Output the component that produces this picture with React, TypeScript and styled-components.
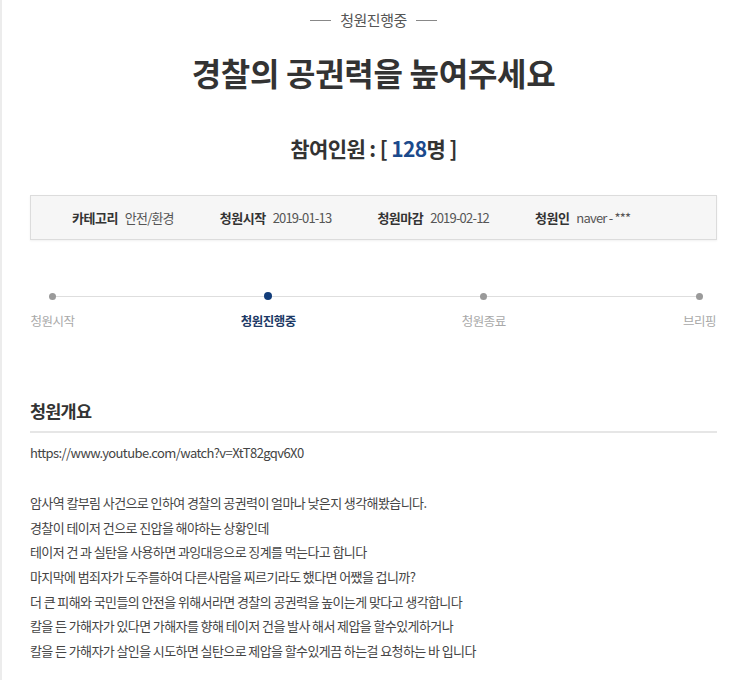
import React from "react";
import styled, { createGlobalStyle } from "styled-components";

const Global = createGlobalStyle`
  html, body { margin: 0; padding: 0; background: #fff; }
  body { font-family: "Noto Sans CJK KR", "Noto Sans", sans-serif; color: #444; }
`;

const Page = styled.div`
  border-left: 2px solid #ececec;
  min-height: 680px;
  box-sizing: border-box;
  padding: 10px 28px 0 28px;
`;

const Status = styled.div`
  display: flex;
  justify-content: center;
  align-items: center;
  gap: 9px;
  font-size: 15px;
  line-height: 20px;
  color: #555;
  letter-spacing: -0.5px;
  &::before, &::after {
    content: "";
    width: 21px;
    height: 1px;
    background: #888;
  }
`;

const Title = styled.h1`
  margin: 22px 0 0;
  text-align: center;
  font-size: 32px;
  line-height: 40px;
  font-weight: 700;
  color: #333;
  letter-spacing: -0.3px;
`;

const Count = styled.div`
  margin-top: 41px;
  text-align: center;
  font-size: 21px;
  line-height: 30px;
  font-weight: 700;
  color: #333;
  letter-spacing: -0.6px;
`;

const Num = styled.span`
  color: #1b4a8c;
`;

const InfoBox = styled.div`
  margin-top: 32px;
  height: 45px;
  box-sizing: border-box;
  border: 1px solid #dcdcdc;
  background: #f6f6f6;
  box-shadow: 0 1px 2px rgba(0, 0, 0, 0.06);
  display: flex;
  align-items: center;
  gap: 46px;
  padding-left: 41px;
`;

const InfoItem = styled.div`
  display: flex;
  align-items: center;
  gap: 7px;
  font-size: 13px;
`;

const InfoLabel = styled.span`
  font-weight: 700;
  color: #333;
  letter-spacing: -0.5px;
`;

const InfoValue = styled.span`
  color: #555;
  letter-spacing: -0.8px;
`;

const Steps = styled.div`
  position: relative;
  margin-top: 52px;
  display: flex;
  justify-content: space-between;
  padding: 0 17.5px 0 22.5px;
  &::before {
    content: "";
    position: absolute;
    left: 22.5px;
    right: 17.5px;
    top: 3.5px;
    height: 1px;
    background: #dedede;
  }
`;

const Step = styled.div`
  width: 0;
  display: flex;
  flex-direction: column;
  align-items: center;
`;

const Dot = styled.span<{ $active?: boolean }>`
  position: relative;
  width: ${(p) => (p.$active ? 8 : 7)}px;
  height: ${(p) => (p.$active ? 8 : 7)}px;
  margin-top: ${(p) => (p.$active ? 0 : 0.5)}px;
  margin-bottom: ${(p) => (p.$active ? 0 : 0.5)}px;
  border-radius: 50%;
  background: ${(p) => (p.$active ? "#123d7a" : "#9a9a9a")};
`;

const StepLabel = styled.span<{ $active?: boolean }>`
  margin-top: 13px;
  white-space: nowrap;
  font-size: 12.5px;
  line-height: 16px;
  letter-spacing: -0.5px;
  font-weight: ${(p) => (p.$active ? 700 : 400)};
  color: ${(p) => (p.$active ? "#1d3a66" : "#a8a8a8")};
`;

const SectionTitle = styled.h2`
  margin: 70px 0 0;
  padding-bottom: 8px;
  border-bottom: 2px solid #e6e6e6;
  font-size: 17.5px;
  line-height: 24px;
  font-weight: 700;
  color: #333;
  letter-spacing: -0.8px;
`;

const Url = styled.div`
  margin-top: 10px;
  font-size: 13px;
  line-height: 20px;
  color: #444;
  letter-spacing: -0.6px;
`;

const Body = styled.div`
  margin-top: 28px;
  font-size: 13px;
  line-height: 24.67px;
  color: #444;
  letter-spacing: -0.6px;
`;

const Line = styled.div``;

const lines = [
  "암사역 칼부림 사건으로 인하여 경찰의 공권력이 얼마나 낮은지 생각해봤습니다.",
  "경찰이 테이저 건으로 진압을 해야하는 상황인데",
  "테이저 건 과 실탄을 사용하면 과잉대응으로 징계를 먹는다고 합니다",
  "마지막에 범죄자가 도주를하여 다른사람을 찌르기라도 했다면 어쨌을 겁니까?",
  "더 큰 피해와 국민들의 안전을 위해서라면 경찰의 공권력을 높이는게 맞다고 생각합니다",
  "칼을 든 가해자가 있다면 가해자를 향해 테이저 건을 발사 해서 제압을 할수있게하거나",
  "칼을 든 가해자가 살인을 시도하면 실탄으로 제압을 할수있게끔 하는걸 요청하는 바 입니다",
];

const info = [
  ["카테고리", "안전/환경"],
  ["청원시작", "2019-01-13"],
  ["청원마감", "2019-02-12"],
  ["청원인", "naver - ***"],
];

const steps = [
  { label: "청원시작", active: false },
  { label: "청원진행중", active: true },
  { label: "청원종료", active: false },
  { label: "브리핑", active: false },
];

export default function App() {
  return (
    <>
      <Global />
      <Page>
        <Status>청원진행중</Status>
        <Title>경찰의 공권력을 높여주세요</Title>
        <Count>
          참여인원 : [ <Num>128</Num>명 ]
        </Count>
        <InfoBox>
          {info.map(([l, v]) => (
            <InfoItem key={l}>
              <InfoLabel>{l}</InfoLabel>
              <InfoValue>{v}</InfoValue>
            </InfoItem>
          ))}
        </InfoBox>
        <Steps>
          {steps.map((s) => (
            <Step key={s.label}>
              <Dot $active={s.active} />
              <StepLabel $active={s.active}>{s.label}</StepLabel>
            </Step>
          ))}
        </Steps>
        <SectionTitle>청원개요</SectionTitle>
        <Url>https://www.youtube.com/watch?v=XtT82gqv6X0</Url>
        <Body>
          {lines.map((t, i) => (
            <Line key={i}>{t}</Line>
          ))}
        </Body>
      </Page>
    </>
  );
}
